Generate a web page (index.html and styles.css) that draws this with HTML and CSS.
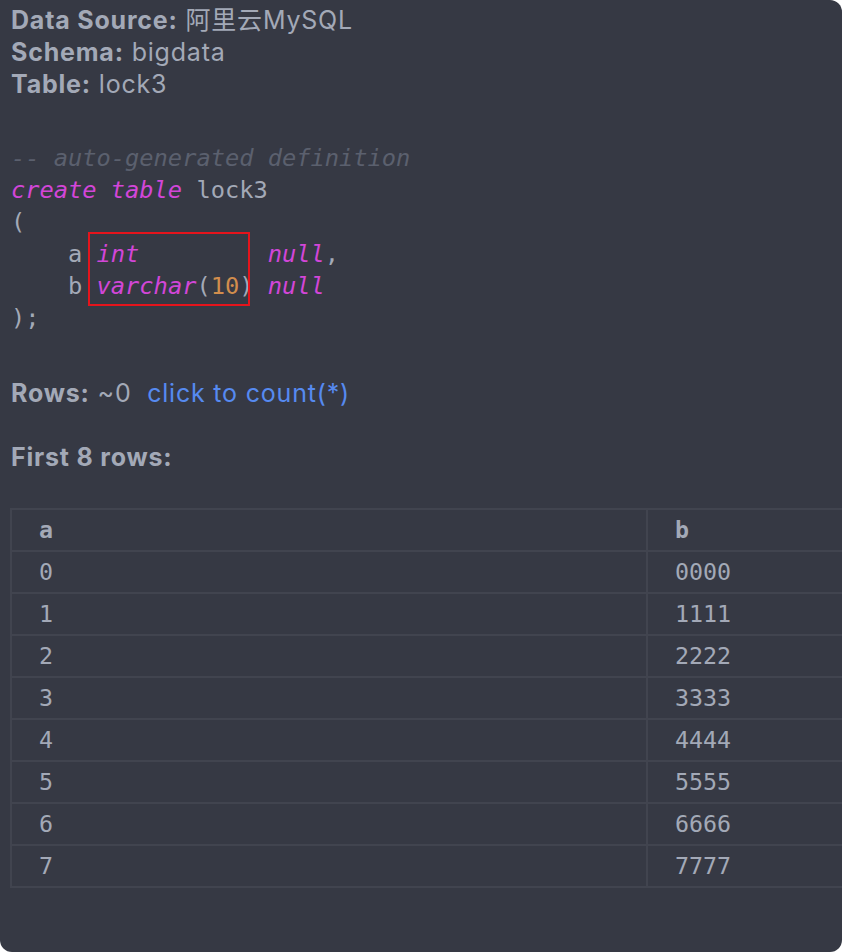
FILE: index.html
```html
<!DOCTYPE html>
<html>
<head>
<meta charset="utf-8">
<link rel="stylesheet" href="styles.css">
</head>
<body>
<div class="panel">
  <div class="meta">
    <div><b>Data Source:</b> 阿里云MySQL</div>
    <div><b>Schema:</b> bigdata</div>
    <div><b>Table:</b> lock3</div>
  </div>
  <div class="code-wrap">
<pre class="code"><span class="cm">-- auto-generated definition</span>
<span class="kw">create table</span> lock3
(
    a <span class="kw">int</span>         <span class="kw">null</span>,
    b <span class="kw">varchar</span>(<span class="num">10</span>) <span class="kw">null</span>
);</pre>
    <div class="highlight"></div>
  </div>
  <div class="rows"><b>Rows:</b> ~0 &nbsp;<span class="link">click to count(*)</span></div>
  <div class="first"><b>First 8 rows:</b></div>
  <table class="data">
    <thead><tr><th class="c1">a</th><th>b</th></tr></thead>
    <tbody>
      <tr><td>0</td><td>0000</td></tr>
      <tr><td>1</td><td>1111</td></tr>
      <tr><td>2</td><td>2222</td></tr>
      <tr><td>3</td><td>3333</td></tr>
      <tr><td>4</td><td>4444</td></tr>
      <tr><td>5</td><td>5555</td></tr>
      <tr><td>6</td><td>6666</td></tr>
      <tr><td>7</td><td>7777</td></tr>
    </tbody>
  </table>
</div>
</body>
</html>
```
FILE: styles.css
```css
html, body {
  margin: 0;
  padding: 0;
  background: #ffffff;
}
.panel {
  width: 842px;
  height: 952px;
  background: #363944;
  border-radius: 0 12px 12px 12px;
  overflow: hidden;
  color: #a3a9b7;
  font-family: Inter, "Noto Sans CJK SC", sans-serif;
  font-size: 25px;
  line-height: 32px;
  padding: 4px 0 0 11px;
  box-sizing: border-box;
}
.meta, .rows, .first {
  letter-spacing: 0.8px;
}
.meta b, .rows b, .first b {
  font-weight: 700;
}
.code-wrap {
  position: relative;
  margin-top: 42px;
}
.code {
  margin: 0;
  font-family: "DejaVu Sans Mono", monospace;
  font-size: 23.7px;
  line-height: 32px;
  color: #a3a9b7;
}
.cm {
  color: #5b606e;
  font-style: italic;
}
.kw {
  color: #d246d8;
  font-style: italic;
}
.num {
  color: #d18d4d;
}
.highlight {
  position: absolute;
  left: 77px;
  top: 90px;
  width: 158px;
  height: 70px;
  border: 2px solid #e5141c;
}
.rows {
  margin-top: 43px;
}
.link {
  color: #568af0;
}
.first {
  margin-top: 32px;
}
.data {
  margin-top: 35px;
  margin-left: -1px;
  border-collapse: collapse;
  width: 880px;
  font-family: "DejaVu Sans Mono", monospace;
  font-size: 23.3px;
  color: #a3a9b7;
}
.data th, .data td {
  border: 2px solid #41444f;
  height: 42px;
  padding: 0 0 0 27px;
  text-align: left;
  box-sizing: border-box;
}
.data th {
  font-weight: 700;
}
.data .c1 {
  width: 636px;
}
```
